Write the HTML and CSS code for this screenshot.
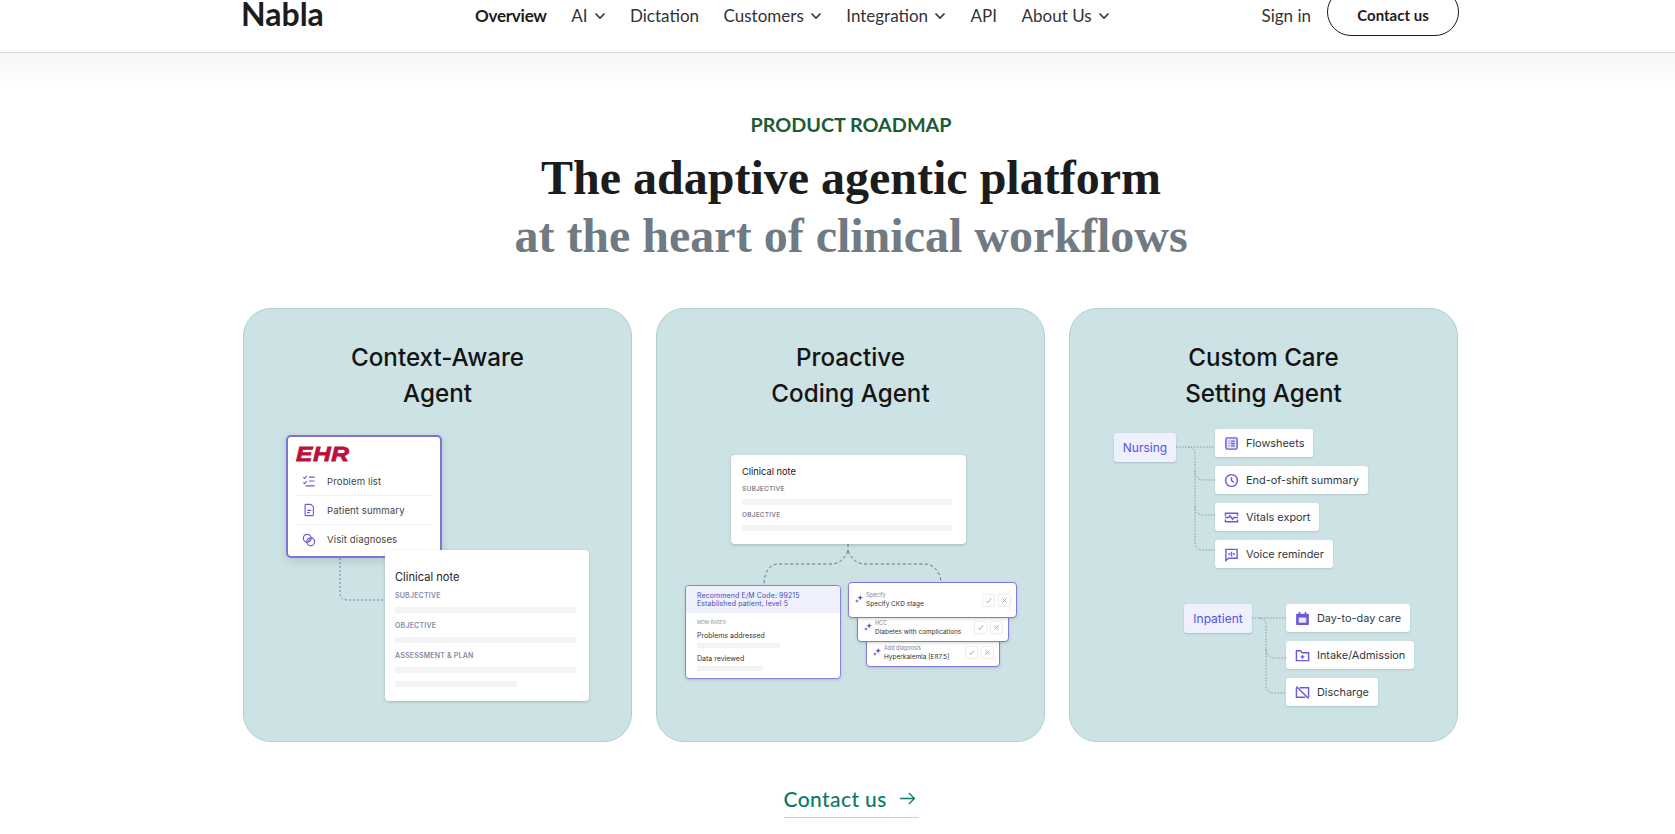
FILE: index.html
```html
<!DOCTYPE html>
<html lang="en">
<head>
<meta charset="utf-8">
<title>Nabla</title>
<link rel="stylesheet" href="styles.css">
</head>
<body>
<header class="nav">
  <div class="nav-inner">
    <a class="logo">Nabla</a>
    <nav class="links">
      <a class="link active">Overview</a>
      <a class="link">AI <svg class="chev" viewBox="0 0 12 8"><path d="M1.500 1.500 6 6l4.500-4.500"/></svg></a>
      <a class="link">Dictation</a>
      <a class="link">Customers <svg class="chev" viewBox="0 0 12 8"><path d="M1.500 1.500 6 6l4.500-4.500"/></svg></a>
      <a class="link">Integration <svg class="chev" viewBox="0 0 12 8"><path d="M1.500 1.500 6 6l4.500-4.500"/></svg></a>
      <a class="link">API</a>
      <a class="link">About Us <svg class="chev" viewBox="0 0 12 8"><path d="M1.500 1.500 6 6l4.500-4.500"/></svg></a>
    </nav>
    <div class="actions">
      <a class="link">Sign in</a>
      <a class="btn">Contact us</a>
    </div>
  </div>
</header>

<main class="main">
  <p class="eyebrow">PRODUCT ROADMAP</p>
  <h1 class="title">The adaptive agentic platform<span class="title-sub">at the heart of clinical workflows</span></h1>

  <section class="cards">
    <article class="card">
      <h2 class="card-title">Context-Aware<br>Agent</h2>
      <div class="diagram">
        <svg class="wires wires-purple" viewBox="0 0 387 329"><path d="M96 145V180Q96 187 104 187H141"/></svg>
        <div class="ehr">
          <div class="ehr-logo">EHR</div>
          <div class="ehr-row">
            <svg class="ic" viewBox="0 0 16 16"><path d="M1.500 3.500 3 5l2.500-3M1.500 9.500 3 11l2.500-3M8 3.500h6.500M8 8h6.500M4 13.500h10.500"/></svg>
            <span>Problem list</span>
          </div>
          <div class="ehr-row">
            <svg class="ic" viewBox="0 0 16 16"><path d="M3.500 2.500a1 1 0 0 1 1-1H10l3 3v9a1 1 0 0 1-1 1H4.500a1 1 0 0 1-1-1z"/><path d="M6 8.500h4.500M6 11h3"/></svg>
            <span>Patient summary</span>
          </div>
          <div class="ehr-row">
            <svg class="ic" viewBox="0 0 16 16"><circle cx="6" cy="6" r="4.500"/><circle cx="10" cy="10" r="4.500"/><path d="M6.500 10 10 6"/></svg>
            <span>Visit diagnoses</span>
          </div>
        </div>
        <div class="note note-large">
          <div class="note-title">Clinical note</div>
          <div class="note-label">SUBJECTIVE</div>
          <div class="bar"></div>
          <div class="note-label">OBJECTIVE</div>
          <div class="bar"></div>
          <div class="note-label">ASSESSMENT &amp; PLAN</div>
          <div class="bar"></div>
          <div class="bar bar-short"></div>
        </div>
      </div>
    </article>

    <article class="card">
      <h2 class="card-title">Proactive<br>Coding Agent</h2>
      <div class="diagram">
        <svg class="wires wires-dash" viewBox="0 0 387 329"><path d="M191 131V138"/><path d="M191 138C186 148 182 151 172 151H121C112 151 107 160 107 172"/><path d="M191 138C196 148 200 151 210 151H268C277 151 284 160 284 170"/></svg>
        <div class="note note-small">
          <div class="note-title">Clinical note</div>
          <div class="note-label">SUBJECTIVE</div>
          <div class="bar"></div>
          <div class="note-label">OBJECTIVE</div>
          <div class="bar"></div>
        </div>
        <div class="code">
          <div class="code-head">Recommend E/M Code: 99215<br>Established patient, level 5</div>
          <div class="code-body">
            <div class="code-tag">MDM-BASED</div>
            <div class="code-row">Problems addressed</div>
            <div class="bar code-bar-a"></div>
            <div class="code-row">Data reviewed</div>
            <div class="bar code-bar-b"></div>
          </div>
        </div>
        <div class="sug sug-1">
          <svg class="spark" viewBox="0 0 10 10"><path d="M6.500 0 7.500 2.500 10 3.500 7.500 4.500 6.500 7 5.500 4.500 3 3.500 5.500 2.500zM2.500 5 3.200 6.800 5 7.500 3.200 8.200 2.500 10 1.800 8.200 0 7.500 1.800 6.800z"/></svg>
          <div class="sug-text"><span class="sug-kind">Specify</span><span class="sug-name">Specify CKD stage</span></div>
          <div class="sug-btns">
            <span class="sug-btn"><svg viewBox="0 0 10 10"><path d="M1.500 5.500 4 8l4.500-6"/></svg></span>
            <span class="sug-btn"><svg viewBox="0 0 10 10"><path d="M2 2l6 6M8 2 2 8"/></svg></span>
          </div>
        </div>
        <div class="sug sug-2">
          <svg class="spark" viewBox="0 0 10 10"><path d="M6.500 0 7.500 2.500 10 3.500 7.500 4.500 6.500 7 5.500 4.500 3 3.500 5.500 2.500zM2.500 5 3.200 6.800 5 7.500 3.200 8.200 2.500 10 1.800 8.200 0 7.500 1.800 6.800z"/></svg>
          <div class="sug-text"><span class="sug-kind">HCC</span><span class="sug-name">Diabetes with complications</span></div>
          <div class="sug-btns">
            <span class="sug-btn"><svg viewBox="0 0 10 10"><path d="M1.500 5.500 4 8l4.500-6"/></svg></span>
            <span class="sug-btn"><svg viewBox="0 0 10 10"><path d="M2 2l6 6M8 2 2 8"/></svg></span>
          </div>
        </div>
        <div class="sug sug-3">
          <svg class="spark" viewBox="0 0 10 10"><path d="M6.500 0 7.500 2.500 10 3.500 7.500 4.500 6.500 7 5.500 4.500 3 3.500 5.500 2.500zM2.500 5 3.200 6.800 5 7.500 3.200 8.200 2.500 10 1.800 8.200 0 7.500 1.800 6.800z"/></svg>
          <div class="sug-text"><span class="sug-kind">Add diagnosis</span><span class="sug-name">Hyperkalemia [E87.5]</span></div>
          <div class="sug-btns">
            <span class="sug-btn"><svg viewBox="0 0 10 10"><path d="M1.500 5.500 4 8l4.500-6"/></svg></span>
            <span class="sug-btn"><svg viewBox="0 0 10 10"><path d="M2 2l6 6M8 2 2 8"/></svg></span>
          </div>
        </div>
      </div>
    </article>

    <article class="card">
      <h2 class="card-title">Custom Care<br>Setting Agent</h2>
      <div class="diagram">
        <svg class="wires wires-dot" viewBox="0 0 387 329">
          <path d="M106 34H145"/><path d="M118 34Q125 34 125 42V129Q125 137 133 137H145"/><path d="M125 58Q125 67 135 67H145"/><path d="M125 93Q125 102 135 102H145"/>
          <path d="M182 205H216"/><path d="M189 205Q196 205 196 213V272Q196 280 204 280H216"/><path d="M196 236Q196 245 206 245H216"/>
        </svg>
        <div class="tag tag-nursing">Nursing</div>
        <div class="item item-a1"><svg class="ic ic-lg" viewBox="0 0 16 16"><rect x="2" y="2" width="12" height="12" rx="1.500" fill="#e4e1fa"/><path d="M5 5.500h.8M5 8h.8M5 10.500h.8M7.500 5.500H11.500M7.500 8H11.500M7.500 10.500H11.500"/></svg><span>Flowsheets</span></div>
        <div class="item item-a2"><svg class="ic ic-lg" viewBox="0 0 16 16"><circle cx="8" cy="8" r="6.300"/><path d="M8 4.500V8l2.500 2"/></svg><span>End-of-shift summary</span></div>
        <div class="item item-a3"><svg class="ic ic-lg" viewBox="0 0 16 16"><path d="M1.500 6V3.500h13V6M1.500 10v2.500h13V10M1 8h4l1.500-2 2.500 4 1.500-2H15"/></svg><span>Vitals export</span></div>
        <div class="item item-a4"><svg class="ic ic-lg" viewBox="0 0 16 16"><path d="M2 2.500h12v9.500H5l-3 2.500z"/><path d="M5.500 6.500v2M8 5v5M10.500 6.500v2"/></svg><span>Voice reminder</span></div>

        <div class="tag tag-inpatient">Inpatient</div>
        <div class="item item-b1"><svg class="ic ic-lg ic-fill" viewBox="0 0 16 16"><path d="M2 3h12a.8.8 0 0 1 .8.800V14a.8.8 0 0 1-.8.800H2a.8.8 0 0 1-.8-.800V3.800A.8.8 0 0 1 2 3z"/><rect class="cut" x="4" y="7" width="8" height="5.500"/><rect x="4" y="1" width="1.600" height="3"/><rect x="10.400" y="1" width="1.600" height="3"/></svg><span>Day-to-day care</span></div>
        <div class="item item-b2"><svg class="ic ic-lg" viewBox="0 0 16 16"><path d="M1.500 3h4.500l1.500 2h7v8.500h-13z"/><path d="M8 7.500v4M6 9.500h4"/></svg><span>Intake/Admission</span></div>
        <div class="item item-b3"><svg class="ic ic-lg" viewBox="0 0 16 16"><path d="M5 3h9.500v10M11 13H1.500V3M1.500 1.500l13 13"/></svg><span>Discharge</span></div>
      </div>
    </article>
  </section>

  <div class="cta-wrap">
    <a class="cta">Contact us <svg class="cta-arrow" viewBox="0 0 18 14"><path d="M1 7h15.500M10.500 1l6 6-6 6"/></svg></a>
  </div>
</main>
</body>
</html>
```
FILE: styles.css
```css
* { box-sizing: border-box; }
html, body { margin: 0; padding: 0; height: 100%; overflow: hidden; background: #fff; }
body { font-family: "Lato", "Liberation Sans", sans-serif; color: #1c1c1c; }
h1, h2, p { margin: 0; }

.nav { height: 53px; background: #fff; border-bottom: 1px solid #dcdcdc; overflow: hidden; }
.nav-inner { width: 1218px; margin-left: 241px; height: 36px; display: flex; align-items: flex-end; }
.logo { width: 234px; font-size: 32px; font-weight: 700; color: #1c1c1c; height: 28px; margin-bottom: 8px; line-height: 28px; }
.links { display: flex; gap: 24.500px; height: 36px; align-items: center; padding-bottom: 4px; }
.link { font-size: 17px; line-height: 22px; color: #333; display: inline-flex; align-items: center; gap: 6px; white-space: nowrap; }
.link.active { font-weight: 700; color: #1c1c1c; letter-spacing: -.25px; }
.chev { width: 12px; height: 8px; fill: none; stroke: #333; stroke-width: 1.600; }
.actions { margin-left: auto; display: flex; align-items: flex-end; gap: 16px; height: 36px; padding-bottom: 4px; }
.actions .link { margin-bottom: 5px; }
.btn { width: 132px; height: 48px; margin-top: -8px; margin-bottom: -4px; border: 1px solid #1c1c1c; border-radius: 24px; display: flex; align-items: center; justify-content: center; padding-top: 5px; font-size: 15px; font-weight: 700; color: #1c1c1c; align-self: flex-end; }

.main { background: linear-gradient(#f7f7f7, #fff 32px); padding-top: 59px; height: 781px; }
.eyebrow { text-align: center; font-size: 19.800px; font-weight: 700; line-height: 24px; color: #1b5c36; width: 1216px; margin-left: 243px; }
.title { width: 1216px; margin: 13px 0 0 243px; text-align: center; font-family: "Liberation Serif", serif; font-size: 48px; font-weight: 700; line-height: 58px; color: #1c1c1c; }
.title-sub { display: block; color: #6f7a82; }

.cards { width: 1215px; margin: 43px 0 0 243px; display: grid; grid-template-columns: repeat(3, 389px); gap: 24px; }
.card { height: 434px; background: #cde2e4; border: 1px solid #aed0d1; border-radius: 28px; padding-top: 31px; display: flex; flex-direction: column; }
.card-title { font-family: "Inter", sans-serif; font-size: 24.200px; font-weight: 500; line-height: 36px; text-align: center; color: #141414; height: 73px; }

.diagram { position: relative; flex: 1; font-family: "Inter", sans-serif; }
.wires { position: absolute; left: 0; top: 0; width: 387px; height: 329px; fill: none; }
.wires-purple { stroke: #7a7a98; stroke-width: 1; stroke-dasharray: 2 2; }
.wires-dash { stroke: #62737f; stroke-width: 1; stroke-dasharray: 3 2.500; }
.wires-dot { stroke: #8b9ca0; stroke-width: 1; stroke-dasharray: 1.500 1.500; }

.ic { width: 14px; height: 14px; flex: none; fill: none; stroke: #6a5ad8; stroke-width: 1.300; }
.ic-lg { width: 15px; height: 15px; stroke-width: 1.500; }
.ic-fill { fill: #6a5ad8; stroke: none; }
.ic-fill .cut { fill: #fff; stroke: none; opacity: .85; }

.ehr { position: absolute; left: 42px; top: 22px; width: 156px; height: 123px; background: #fff; border: 2px solid #7f72d8; border-radius: 5px; padding: 9px 8px 0; box-shadow: 0 3px 8px rgba(60, 80, 100, .18); }
.ehr-logo { font-family: "Liberation Sans", sans-serif; font-size: 21px; font-weight: 700; font-style: italic; line-height: 16px; letter-spacing: .5px; color: #bd0f3e; -webkit-text-stroke: .8px #bd0f3e; height: 16px; margin-bottom: 5px; transform: scaleX(1.170); transform-origin: left center; }
.ehr-row { display: flex; align-items: center; gap: 11px; padding-left: 6px; height: 29px; border-bottom: 1px solid #f0f0f4; font-size: 9.600px; color: #444; letter-spacing: .1px; }
.ehr-row:last-child { border-bottom: 0; }

.note { position: absolute; background: #fff; border-radius: 4px; box-shadow: 0 1px 3px rgba(60, 90, 100, .3); }
.note-large { left: 141px; top: 137px; width: 204px; height: 151px; padding: 19px 13px 0 10px; }
.note-small { left: 74px; top: 42px; width: 235px; height: 89px; padding: 10px 14px 0 11px; }
.note-title { font-size: 9.300px; line-height: 14px; color: #222; font-weight: 400; }
.note-large .note-title { font-size: 11.100px; line-height: 16px; }
.note-label { font-size: 7px; line-height: 10px; font-weight: 600; color: #8888aa; margin-top: 8px; letter-spacing: .2px; }
.note-large .note-title + .note-label { margin-top: 6px; }
.note-small .note-label { line-height: 8px; font-size: 6.500px; color: #85858f; margin-top: 6px; }
.bar { height: 6px; background: #f3f3f3; margin-top: 6px; }
.bar-short { width: 122px; margin-top: 8px; }

.code { position: absolute; left: 28px; top: 172px; width: 156px; height: 94px; background: #fff; border: 1.500px solid #8d83dc; border-radius: 4px; overflow: hidden; box-shadow: 0 1px 3px rgba(60, 90, 100, .25); }
.code-head { height: 27px; background: #eef0fc; padding: 5.500px 11px 0 11px; font-size: 7px; line-height: 8.500px; color: #4a4cc0; letter-spacing: .1px; white-space: nowrap; }
.code-body { padding: 7px 11px 0; }
.code-tag { font-size: 4.500px; line-height: 6px; color: #8a8a96; letter-spacing: .1px; }
.code-row { font-size: 7px; line-height: 10px; color: #333; margin-top: 2px; }
.code-tag + .code-row { margin-top: 5px; }
.code .bar { margin-top: 2px; height: 5px; }
.code-row + .bar + .code-row { margin-top: 6px; }
.code-bar-a { width: 83px; }
.code-bar-b { width: 66px; }

.sug { position: absolute; display: flex; align-items: center; gap: 3px; background: #fff; border: 1.500px solid #8478dc; border-radius: 4px; padding: 0 5px 0 6px; box-shadow: 0 1px 3px rgba(60, 90, 100, .25); }
.sug-1 { left: 191px; top: 169px; width: 169px; height: 36px; z-index: 3; }
.sug-2 { left: 200px; top: 200px; width: 152px; height: 29px; z-index: 2; }
.sug-3 { left: 209px; top: 225px; width: 134px; height: 29px; z-index: 1; }
.spark { width: 8px; height: 8px; flex: none; fill: #5a50c8; margin-top: -2px; }
.sug-text { display: flex; flex-direction: column; }
.sug-kind { font-size: 5.500px; line-height: 8px; color: #85858f; }
.sug-name { font-size: 6.500px; line-height: 10px; color: #333; white-space: nowrap; }
.sug-btns { margin-left: auto; display: flex; gap: 3px; }
.sug-btn { width: 13px; height: 13px; border: 1px solid #eee; border-radius: 2px; display: flex; align-items: center; justify-content: center; box-shadow: 0 0 1px rgba(0, 0, 0, .08); }
.sug-btn svg { width: 7px; height: 7px; fill: none; stroke: #9a9aa2; stroke-width: 1.200; }

.tag { position: absolute; display: flex; align-items: center; justify-content: center; height: 29px; background: #eef0fd; color: #4f55e2; font-size: 12px; border-radius: 3px; box-shadow: 0 1px 2px rgba(60, 90, 100, .25); }
.tag-nursing { left: 44px; top: 20px; width: 62px; }
.tag-inpatient { left: 114px; top: 191px; width: 68px; }

.item { position: absolute; display: flex; align-items: center; gap: 7px; height: 28px; padding: 0 9px 0 9px; background: #fff; border-radius: 3px; font-size: 10.900px; color: #33363c; white-space: nowrap; box-shadow: 0 1px 2px rgba(60, 90, 100, .2); }
.item-a1 { left: 145px; top: 16px; }
.item-a2 { left: 145px; top: 53px; }
.item-a3 { left: 145px; top: 90px; }
.item-a4 { left: 145px; top: 127px; }
.item-b1 { left: 216px; top: 191px; }
.item-b2 { left: 216px; top: 228px; }
.item-b3 { left: 216px; top: 265px; }

.cta-wrap { width: 1216px; margin: 42px 0 0 243px; display: flex; justify-content: center; }
.cta { display: inline-flex; align-items: center; gap: 12px; width: 135px; height: 34px; border-bottom: 1px solid #c6d2d2; padding-bottom: 5px; font-size: 21px; font-weight: 500; color: #0b7a68; letter-spacing: .4px; white-space: nowrap; }
.cta-arrow { width: 17px; height: 13px; fill: none; stroke: #0b7a68; stroke-width: 1.400; }
```
